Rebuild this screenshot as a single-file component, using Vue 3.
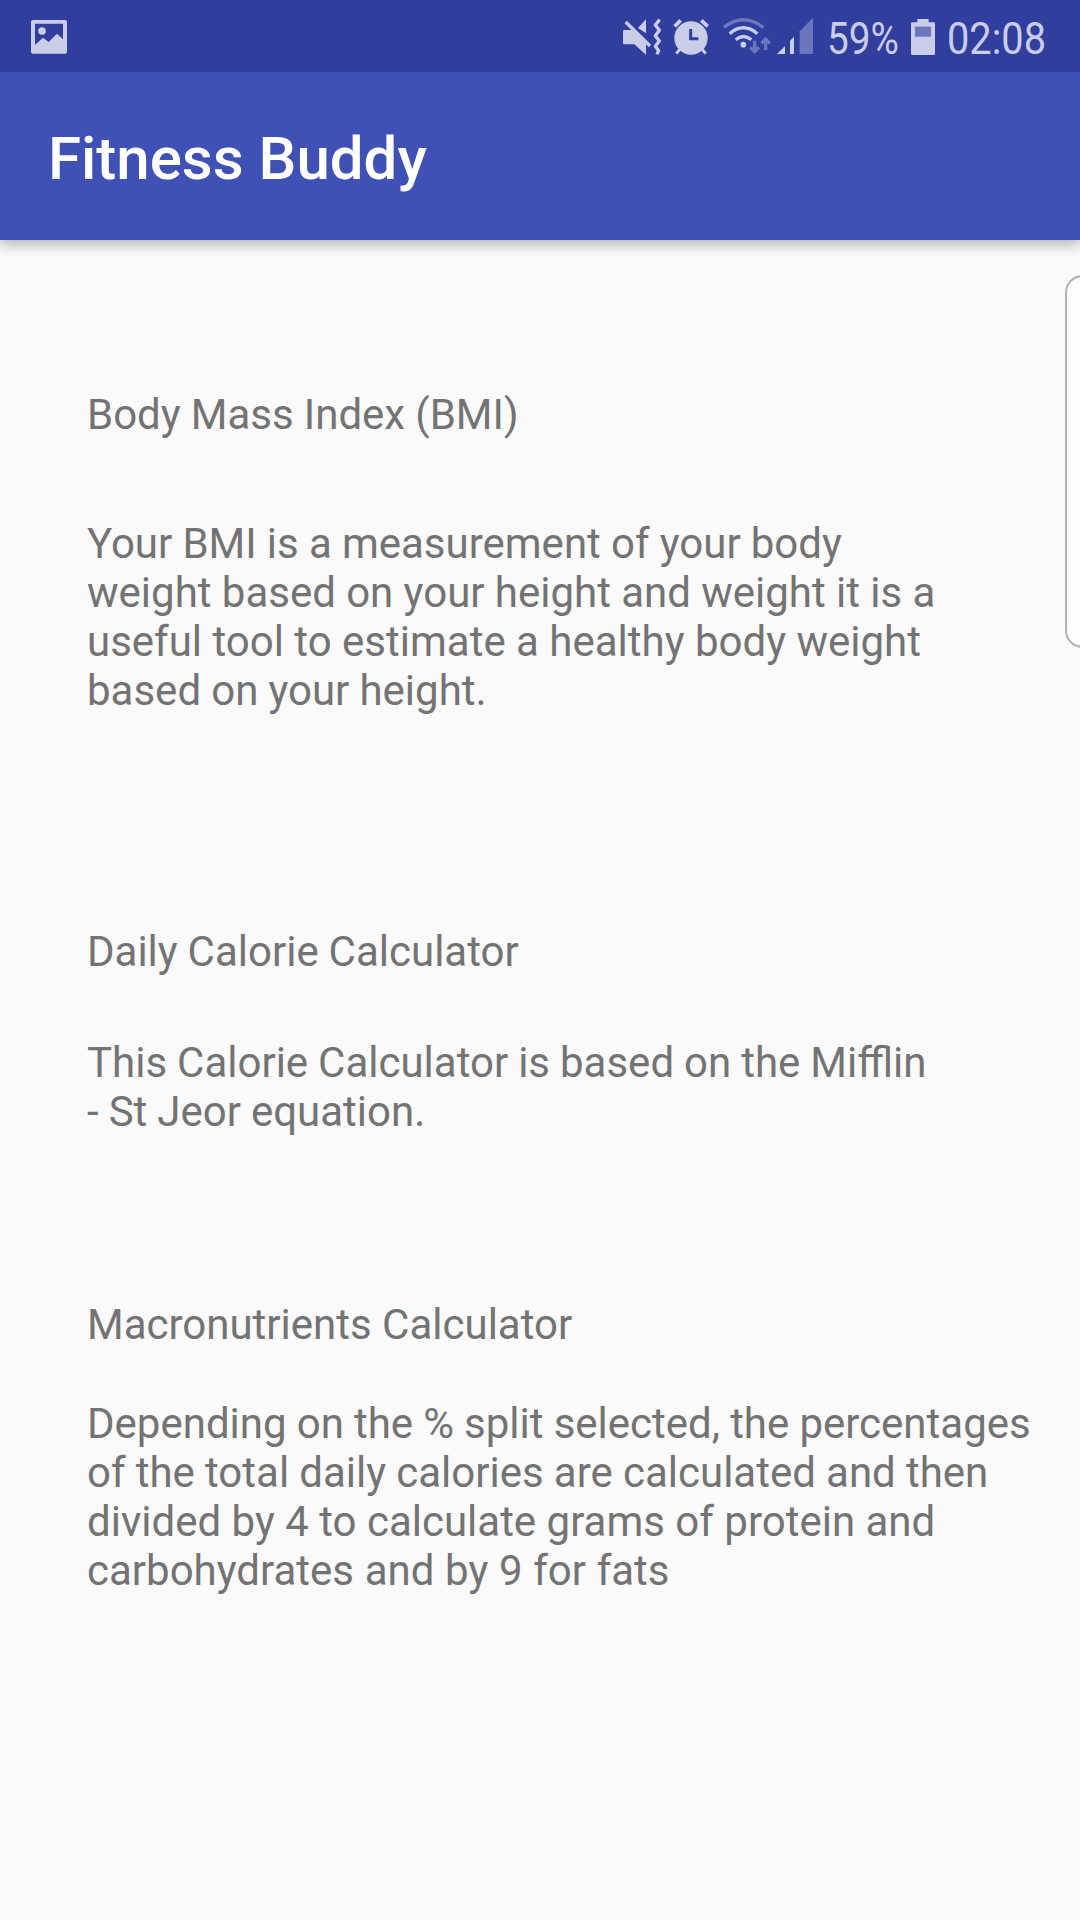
<script setup>
const sections = [
  {
    id: 'bmi',
    title: 'Body Mass Index (BMI)',
    titleWs: -0.3,
    lines: [
      { text: 'Your BMI is a measurement of your body', ws: -0.25 },
      { text: 'weight based on your height and weight it is a', ws: -0.12 },
      { text: 'useful tool to estimate a healthy body weight', ws: 0 },
      { text: 'based on your height.', ws: -0.3 },
    ],
  },
  {
    id: 'calories',
    title: 'Daily Calorie Calculator',
    titleWs: -0.5,
    lines: [
      { text: 'This Calorie Calculator is based on the Mifflin', ws: -0.45 },
      { text: '- St Jeor equation.', ws: -0.4 },
    ],
  },
  {
    id: 'macros',
    title: 'Macronutrients Calculator',
    titleWs: 0,
    lines: [
      { text: 'Depending on the % split selected, the percentages', ws: -0.3 },
      { text: 'of the total daily calories are calculated and then', ws: -0.25 },
      { text: 'divided by 4 to calculate grams of protein and', ws: 0 },
      { text: 'carbohydrates and by 9 for fats', ws: 0.25 },
    ],
  },
]
</script>

<template>
  <div class="screen">
    <header class="status-bar">
      <!-- picture notification -->
      <svg class="picture" width="40" height="72" viewBox="90 0 120 216">
        <path fill-rule="evenodd" d="M99 60H195Q201 60 201 66V155Q201 161 195 161H99Q93 161 93 155V66Q93 60 99 60ZM105 71V135L129 113L146 126L171 101L189 118V71Z" />
        <circle cx="126" cy="93" r="11.5" />
      </svg>
      <div class="tray">
        <!-- muted, vibrating -->
        <svg width="40" height="72" viewBox="36 0 120 216">
          <path d="M43 90H66L108 130V164L73 133H43Q39 133 39 129V94Q39 90 43 90Z" />
          <path d="M84 84L108 58V100Z" />
          <path class="stroke" stroke-width="10" d="M47 66L120 138" />
          <path class="stroke" stroke-width="10" stroke-linejoin="round" d="M149 59L136 75L148 91L136 107L148 123L136 139L146 152L141 163" />
        </svg>
        <!-- alarm -->
        <svg class="alarm" width="40" height="72" viewBox="183 0 120 216">
          <circle cx="243" cy="114" r="50" />
          <path class="stroke" stroke-width="11" d="M194 79L212 61M274 61L293 79" />
          <path class="stroke" stroke-width="9" d="M210 147L199 161M276 147L287 161" />
          <path fill="none" stroke="#303e9e" stroke-width="9" d="M242 87V116H265" />
        </svg>
        <!-- wi-fi -->
        <svg class="wifi" width="50" height="72" viewBox="336 0 150 216">
          <g fill="none" stroke-width="10">
            <path stroke="#6b76bc" d="M342 82Q400 36 460 82" />
            <path stroke="#cacde8" d="M359 101Q400 66 442 101" />
            <path stroke="#cacde8" d="M377 119Q400 100 424 119" />
          </g>
          <circle cx="400" cy="134" r="8.5" />
          <g fill="none" stroke="#6b76bc" stroke-width="10">
            <path d="M434 122V155M421 142L434 155L447 142" />
            <path d="M467 150V117M454 130L467 117L480 130" />
          </g>
        </svg>
        <!-- signal strength -->
        <svg class="signal" width="40" height="72" viewBox="495 0 120 216">
          <path d="M501 162L525 138V162ZM540 162V122L552 110V162Z" />
          <path fill="#6b76bc" d="M569 162V94L609 53V162Z" />
        </svg>
        <svg class="percent" width="76" height="72" viewBox="0 0 76 72">
          <text x="1" y="54" textLength="72" lengthAdjust="spacingAndGlyphs">59%</text>
        </svg>
        <!-- battery -->
        <svg class="battery" width="24" height="72" viewBox="273 0 72 216">
          <path d="M292 57H326V67H341Q345 67 345 71V161Q345 165 341 165H277Q273 165 273 161V71Q273 67 277 67H292Z" />
          <path fill="#6b76bc" stroke="#8992ca" stroke-width="1" d="M285 80H333V110H285Z" />
        </svg>
        <svg class="clock" width="102" height="72" viewBox="0 0 102 72">
          <text x="1" y="54" textLength="99" lengthAdjust="spacingAndGlyphs">02:08</text>
        </svg>
      </div>
    </header>

    <div class="app-bar">
      <h1>Fitness Buddy</h1>
    </div>

    <main>
      <section v-for="s in sections" :key="s.id" :class="s.id">
        <h2 :style="{ wordSpacing: s.titleWs + 'px' }">{{ s.title }}</h2>
        <p>
          <span v-for="line in s.lines" :key="line.text" :style="{ wordSpacing: line.ws + 'px' }">{{ line.text }}</span>
        </p>
      </section>
    </main>
    <div class="edge-handle"></div>
  </div>
</template>

<style>
body {
  background: #fafafa;
}
</style>

<style scoped>
.screen {
  position: relative;
  display: flex;
  flex-direction: column;
  width: 1080px;
  height: 1920px;
  overflow: hidden;
  background: #fafafa;
  font-family: Roboto, sans-serif;
}
.status-bar {
  display: flex;
  justify-content: space-between;
  height: 72px;
  padding: 0 32px 0 30px;
  background: #303e9e;
  fill: #cacde8;
  z-index: 2;
}
svg {
  display: block;
  flex: none;
  overflow: visible;
}
svg text {
  font-size: 45px;
}
.tray {
  display: flex;
}
.stroke {
  fill: none;
  stroke: #cacde8;
}
.alarm {
  margin-left: 9px;
}
.wifi {
  margin-left: 11px;
}
.signal {
  margin-left: 3px;
}
.percent {
  margin-left: 11px;
}
.battery {
  margin-left: 9px;
}
.clock {
  margin-left: 11px;
}
.app-bar {
  display: flex;
  align-items: center;
  box-sizing: border-box;
  height: 168px;
  flex: none;
  padding: 6px 0 0 48px;
  background: #3f51b5;
  box-shadow: 0 5px 12px rgba(0, 0, 0, 0.28);
  color: #fff;
  z-index: 1;
}
h1 {
  margin: 0;
  font-size: 60px;
  font-weight: 500;
  line-height: 70px;
}
main {
  display: flex;
  flex-direction: column;
  padding: 150px 0 0 87px;
  color: #737373;
  font-size: 42px;
  line-height: 49px;
}
h2 {
  margin: 0;
  font: inherit;
}
p {
  margin: 0;
}
p span {
  display: block;
  white-space: nowrap;
}
.bmi p {
  margin-top: 80px;
}
.calories {
  margin-top: 212px;
}
.calories p {
  margin-top: 62px;
}
.macros {
  margin-top: 164px;
}
.macros p {
  margin-top: 50px;
}
.edge-handle {
  position: absolute;
  top: 275px;
  right: -20px;
  box-sizing: border-box;
  width: 35px;
  height: 373px;
  border: 2px solid #b0b0b0;
  border-radius: 18px;
  background: #fdfdfd;
}
</style>
